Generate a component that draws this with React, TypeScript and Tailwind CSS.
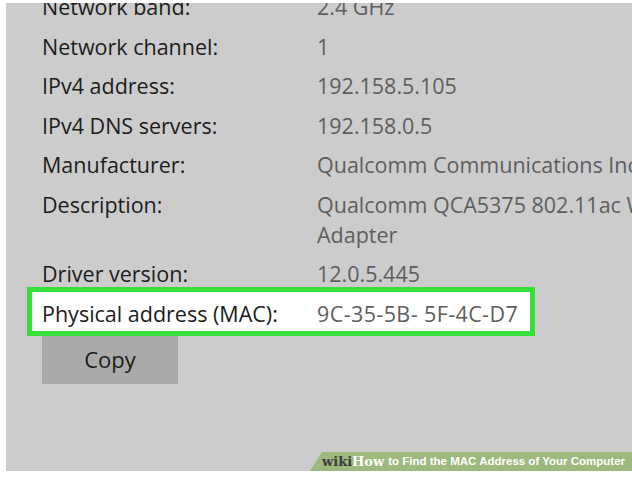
const rows: { label: string; value: string[] }[] = [
  { label: "Network band:", value: ["2.4 GHz"] },
  { label: "Network channel:", value: ["1"] },
  { label: "IPv4 address:", value: ["192.158.5.105"] },
  { label: "IPv4 DNS servers:", value: ["192.158.0.5"] },
  { label: "Manufacturer:", value: ["Qualcomm Communications Inc."] },
  { label: "Description:", value: ["Qualcomm QCA5375 802.11ac Wireless Network", "Adapter"] },
  { label: "Driver version:", value: ["12.0.5.445"] },
];

export default function App() {
  return (
    <div className="h-[478px] w-[632px] overflow-hidden bg-white pl-[6px] pt-[3px]">
      <div
        className="relative h-[468px] w-[626px] overflow-hidden bg-[#cccccc]"
        style={{ fontFamily: '"Open Sans", "Noto Sans", sans-serif' }}
      >
        <div className="-mt-[11px] flex flex-col gap-[9.5px] pl-[36px] text-[21.5px] leading-[30px]">
          {rows.map((row) => (
            <div key={row.label} className="flex whitespace-nowrap">
              <div className="w-[275px] shrink-0 text-[#1c1c1c]">{row.label}</div>
              <div className="text-[#5e5e5e]">
                {row.value.map((line) => (
                  <div key={line}>{line}</div>
                ))}
              </div>
            </div>
          ))}
          <div className="-ml-[15px] -my-[12px] flex w-[508px] whitespace-nowrap border-[5px] border-[#36e036] bg-white pb-[2px] pl-[10px] pt-[7px]">
            <div className="w-[275px] shrink-0 text-[#1c1c1c]">Physical address (MAC):</div>
            <div className="tracking-[0.4px] text-[#5e5e5e]">9C-35-5B- 5F-4C-D7</div>
          </div>
        </div>
        <button
          type="button"
          className="ml-[36px] mt-[12px] h-[48px] w-[136px] bg-[#aaaaaa] text-[22px] text-[#1c1c1c]"
        >
          Copy
        </button>

        <div className="absolute bottom-0 right-0 flex h-[19px] w-[322px] items-center whitespace-nowrap bg-[#9db97d] pl-[12px] [clip-path:polygon(12px_0,100%_0,100%_100%,0_100%)]">
          <span
            className="text-[13px] font-bold text-[#3c3c3c]"
            style={{ fontFamily: '"DejaVu Serif", serif' }}
          >
            wiki
          </span>
          <span
            className="text-[13px] font-bold text-white"
            style={{ fontFamily: '"DejaVu Serif", serif' }}
          >
            How
          </span>
          <span
            className="ml-[4px] text-[11.5px] font-semibold text-white"
            style={{ fontFamily: '"Liberation Sans", Arial, sans-serif' }}
          >
            to Find the MAC Address of Your Computer
          </span>
        </div>
      </div>
    </div>
  );
}
